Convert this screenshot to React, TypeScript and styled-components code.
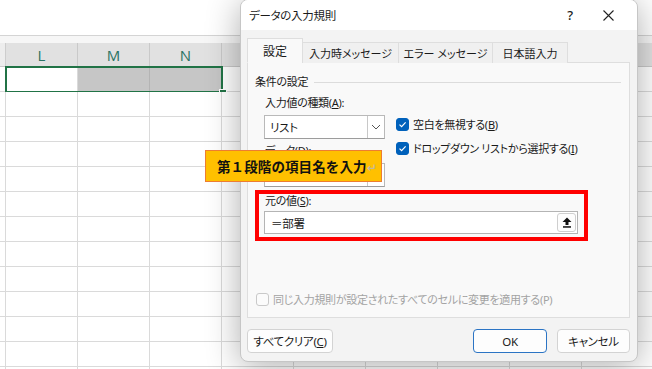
import styled, { createGlobalStyle } from "styled-components";

const GlobalStyle = createGlobalStyle`
  html, body {
    margin: 0;
    padding: 0;
  }
  body {
    background: #fff;
    font-family: "Noto Sans", "Noto Sans CJK JP", sans-serif;
  }
`;

const Screen = styled.div`
  position: relative;
  width: 652px;
  height: 369px;
  overflow: hidden;
  background: #fff;
`;

/* ---------- spreadsheet behind the dialog ---------- */

const Sheet = styled.div`
  display: flex;
  flex-direction: column;
`;

const FormulaArea = styled.div`
  height: 35px;
  background: #fff;
  border-bottom: 1px solid #d4d4d4;
`;

const Strip = styled.div`
  height: 7px;
  background: #f6f6f6;
`;

const HeaderRow = styled.div`
  display: flex;
  height: 23px;
  background: #e1e1e1;
  border-bottom: 1px solid #c9c9c9;
`;

const Corner = styled.div`
  width: 5px;
  flex: none;
  background: #ededed;
  border-right: 1px solid #cdcdcd;
`;

const ColHead = styled.div`
  width: 71px;
  flex: none;
  display: flex;
  align-items: center;
  justify-content: center;
  border-right: 1px solid #c9c9c9;
  font-family: "Open Sans", "Liberation Sans", sans-serif;
  font-size: 15px;
  color: #2a7363;
`;

const Row = styled.div`
  position: relative;
  display: flex;
  height: 24px;
  border-bottom: 1px solid #dadada;
`;

const RowStub = styled.div`
  width: 5px;
  flex: none;
  border-right: 1px solid #dadada;
`;

const Cell = styled.div<{ $selected?: boolean }>`
  width: 71px;
  flex: none;
  border-right: 1px solid ${(p) => (p.$selected ? "#b4b4b4" : "#dadada")};
  background: ${(p) => (p.$selected ? "#c6c6c6" : "#fff")};
`;

const Selection = styled.div`
  position: absolute;
  left: 5px;
  top: -1px;
  width: 218px;
  height: 27px;
  box-sizing: border-box;
  border: 2px solid #217346;
`;

const FillHandle = styled.div`
  position: absolute;
  left: 219px;
  top: 22px;
  width: 6px;
  height: 6px;
  background: #217346;
  border: 1px solid #fff;
`;

/* ---------- dialog ---------- */

const Dialog = styled.div`
  position: absolute;
  left: 240px;
  top: -1px;
  width: 398px;
  height: 363px;
  box-sizing: border-box;
  display: flex;
  flex-direction: column;
  background: #f3f3f3;
  border: 1px solid #c6c6c6;
  border-radius: 8px;
  box-shadow: 0 4px 34px rgba(0, 0, 0, 0.32);
  overflow: hidden;
  font-size: 11px;
  letter-spacing: -0.3px;
  color: #1a1a1a;
  font-feature-settings: "palt";
`;

const TitleBar = styled.div`
  height: 30px;
  flex: none;
  display: flex;
  align-items: center;
  background: #fff;
  padding-left: 8px;
`;

const Title = styled.div`
  flex: 1;
  font-size: 11.5px;
`;

const TitleButton = styled.div<{ $w: number }>`
  width: ${(p) => p.$w}px;
  height: 30px;
  display: flex;
  align-items: center;
  justify-content: center;
  font-size: 13px;
  font-weight: 500;
`;

const Body = styled.div`
  flex: 1;
  display: flex;
  flex-direction: column;
  padding: 8px 7px 0 6px;
`;

const Tabs = styled.div`
  display: flex;
  align-items: flex-end;
  height: 25px;
  margin-bottom: -1px;
  position: relative;
  z-index: 1;
`;

const Tab = styled.div<{ $w: number; $active?: boolean }>`
  width: ${(p) => p.$w}px;
  height: ${(p) => (p.$active ? 25 : 21)}px;
  box-sizing: border-box;
  display: flex;
  align-items: center;
  justify-content: center;
  margin-right: -1px;
  white-space: nowrap;
  letter-spacing: 0;
  background: ${(p) => (p.$active ? "#f9f9f9" : "#f0f0f0")};
  border: 1px solid #dedede;
  border-bottom: ${(p) => (p.$active ? "1px solid #f9f9f9" : "none")};
  font-size: ${(p) => (p.$active ? 12 : 11)}px;
`;

const Panel = styled.div`
  height: 256px;
  box-sizing: border-box;
  display: flex;
  flex-direction: column;
  background: #f9f9f9;
  border: 1px solid #dedede;
  padding: 11px 8px 10px 7px;
`;

const GroupHeader = styled.div`
  display: flex;
  align-items: center;
  gap: 6px;
  line-height: 16px;
`;

const GroupLine = styled.div`
  flex: 1;
  height: 1px;
  background: #dcdcdc;
`;

const Conditions = styled.div`
  display: flex;
  margin-top: 5px;
`;

const LeftCol = styled.div`
  width: 121px;
  margin-left: 9px;
  display: flex;
  flex-direction: column;
`;

const FieldLabel = styled.div<{ $top?: number; $gap?: number }>`
  line-height: 16px;
  margin-left: 1px;
  margin-top: ${(p) => p.$top ?? 0}px;
  margin-bottom: ${(p) => p.$gap ?? 4}px;
  white-space: nowrap;
`;

const Field = styled.div`
  height: 24px;
  box-sizing: border-box;
  display: flex;
  background: #fff;
  border: 1px solid #b9b9b9;
  border-bottom-color: #9c9c9c;
`;

const FieldText = styled.div`
  flex: 1;
  display: flex;
  align-items: center;
  padding-left: 5px;
  font-size: 11.5px;
`;

const FieldSide = styled.div`
  width: 16px;
  display: flex;
  align-items: center;
  justify-content: center;
  border-left: 1px solid #c8c8c8;
`;

const RightCol = styled.div`
  margin-left: 11px;
  margin-top: 21px;
  display: flex;
  flex-direction: column;
  gap: 8px;
`;

const CheckRow = styled.div<{ $disabled?: boolean }>`
  display: flex;
  align-items: center;
  gap: 4px;
  height: 16px;
  white-space: nowrap;
  color: ${(p) => (p.$disabled ? "#a3a3a3" : "#1a1a1a")};
  margin-left: ${(p) => (p.$disabled ? 1 : 0)}px;
`;

const Box = styled.div<{ $checked?: boolean }>`
  width: 13px;
  height: 13px;
  flex: none;
  box-sizing: border-box;
  border-radius: 3px;
  display: flex;
  align-items: center;
  justify-content: center;
  background: ${(p) => (p.$checked ? "#0061bb" : "#fbfbfb")};
  border: 1px solid ${(p) => (p.$checked ? "#0061bb" : "#c9c9c9")};
`;

const RedFrame = styled.div`
  margin-top: 3px;
  width: 333px;
  height: 51px;
  box-sizing: border-box;
  border: 4px solid #ff0000;
  padding: 0 6px 3px 5px;
  display: flex;
  flex-direction: column;
`;

const SourceLabel = styled.div`
  line-height: 14px;
  margin-bottom: 3px;
  margin-left: 1px;
`;

const SourceField = styled.div`
  height: 23px;
  box-sizing: border-box;
  display: flex;
  align-items: center;
  background: #fff;
  border: 1px solid #b4b4b4;
  padding: 1px;
`;

const PickButton = styled.div`
  width: 19px;
  height: 19px;
  box-sizing: border-box;
  display: flex;
  align-items: center;
  justify-content: center;
  border: 1px solid #cfcfcf;
  border-radius: 3px;
  background: #fdfdfd;
`;

const Spacer = styled.div`
  flex: 1;
`;

const Footer = styled.div`
  height: 43px;
  box-sizing: border-box;
  display: flex;
  align-items: flex-start;
  gap: 10px;
  padding: 11px 7px 8px 6px;
`;

const Button = styled.div<{ $w: number; $primary?: boolean }>`
  width: ${(p) => p.$w}px;
  height: 24px;
  box-sizing: border-box;
  display: flex;
  align-items: center;
  justify-content: center;
  white-space: nowrap;
  background: #fdfdfd;
  border: 1px solid ${(p) => (p.$primary ? "#2b74c4" : "#d3d3d3")};
  border-radius: 4px;
  font-size: 11.5px;
`;

const U = styled.span`
  text-decoration: underline;
`;

/* ---------- callout ---------- */

const Callout = styled.div`
  position: absolute;
  left: 205px;
  top: 150px;
  width: 177px;
  height: 32px;
  box-sizing: border-box;
  display: flex;
  align-items: center;
  padding-left: 11px;
  background: #ffc000;
  border: 1px solid #ed7d31;
  font-family: "Noto Sans CJK JP", sans-serif;
  font-weight: 700;
  font-size: 13.5px;
  letter-spacing: 0.1px;
  color: #111;
`;

const Return = styled.span`
  font-weight: 400;
  font-size: 12px;
  color: #b8b8b8;
`;

const Check = () => (
  <svg width="9" height="9" viewBox="0 0 9 9">
    <path d="M1.5 4.6 L3.6 6.6 L7.6 2.4" fill="none" stroke="#fff" strokeWidth="1.2" />
  </svg>
);

const Chevron = () => (
  <svg width="10" height="6" viewBox="0 0 10 6">
    <path d="M1 1 L5 5 L9 1" fill="none" stroke="#555" strokeWidth="1" />
  </svg>
);

const UploadIcon = () => (
  <svg width="10" height="11" viewBox="0 0 10 11">
    <path d="M5 0.5 L9.5 5 H6.5 V8 H3.5 V5 H0.5 Z" fill="#111" />
    <rect x="1" y="9.2" width="8" height="1.5" fill="#111" />
  </svg>
);

const CloseIcon = () => (
  <svg width="11" height="11" viewBox="0 0 11 11">
    <path d="M0.5 0.5 L10.5 10.5 M10.5 0.5 L0.5 10.5" stroke="#222" strokeWidth="1.1" />
  </svg>
);

const columns = ["L", "M", "N", "O", "P", "Q", "R", "S", "T"];
const rows = Array.from({ length: 13 }, (_, i) => i);

export default function App() {
  return (
    <Screen>
      <GlobalStyle />
      <Sheet>
        <FormulaArea />
        <Strip />
        <HeaderRow>
          <Corner />
          {columns.map((c) => (
            <ColHead key={c}>{c}</ColHead>
          ))}
        </HeaderRow>
        {rows.map((r) => (
          <Row key={r}>
            <RowStub />
            {columns.map((c) => (
              <Cell key={c} $selected={r === 0 && (c === "M" || c === "N")} />
            ))}
            {r === 0 && (
              <>
                <Selection />
                <FillHandle />
              </>
            )}
          </Row>
        ))}
      </Sheet>

      <Dialog>
        <TitleBar>
          <Title>データの入力規則</Title>
          <TitleButton $w={32}>?</TitleButton>
          <TitleButton $w={44}>
            <CloseIcon />
          </TitleButton>
          <Spacer style={{ flex: "none", width: 7 }} />
        </TitleBar>
        <Body>
          <Tabs>
            <Tab $w={56} $active>
              設定
            </Tab>
            <Tab $w={97}>入力時メッセージ</Tab>
            <Tab $w={95}>エラー メッセージ</Tab>
            <Tab $w={76}>日本語入力</Tab>
          </Tabs>
          <Panel>
            <GroupHeader>
              <span>条件の設定</span>
              <GroupLine />
            </GroupHeader>
            <Conditions>
              <LeftCol>
                <FieldLabel>
                  入力値の種類(<U>A</U>):
                </FieldLabel>
                <Field>
                  <FieldText>リスト</FieldText>
                  <FieldSide>
                    <Chevron />
                  </FieldSide>
                </Field>
                <FieldLabel $top={4} $gap={4}>
                  データ(<U>D</U>):
                </FieldLabel>
                <Field>
                  <FieldText />
                  <FieldSide>
                    <UploadIcon />
                  </FieldSide>
                </Field>
              </LeftCol>
              <RightCol>
                <CheckRow>
                  <Box $checked>
                    <Check />
                  </Box>
                  <span>
                    空白を無視する(<U>B</U>)
                  </span>
                </CheckRow>
                <CheckRow>
                  <Box $checked>
                    <Check />
                  </Box>
                  <span>
                    ドロップダウン リストから選択する(<U>I</U>)
                  </span>
                </CheckRow>
              </RightCol>
            </Conditions>
            <RedFrame>
              <SourceLabel>
                元の値(<U>S</U>):
              </SourceLabel>
              <SourceField>
                <FieldText>＝部署</FieldText>
                <PickButton>
                  <UploadIcon />
                </PickButton>
              </SourceField>
            </RedFrame>
            <Spacer />
            <CheckRow $disabled>
              <Box />
              <span>同じ入力規則が設定されたすべてのセルに変更を適用する(P)</span>
            </CheckRow>
          </Panel>
        </Body>
        <Footer>
          <Button $w={86}>
            <span>
              すべてクリア(<U>C</U>)
            </span>
          </Button>
          <Spacer />
          <Button $w={74} $primary>
            OK
          </Button>
          <Button $w={73}>キャンセル</Button>
        </Footer>
      </Dialog>

      <Callout>
        <span>
          第１段階の項目名を入力<Return>↵</Return>
        </span>
      </Callout>
    </Screen>
  );
}
